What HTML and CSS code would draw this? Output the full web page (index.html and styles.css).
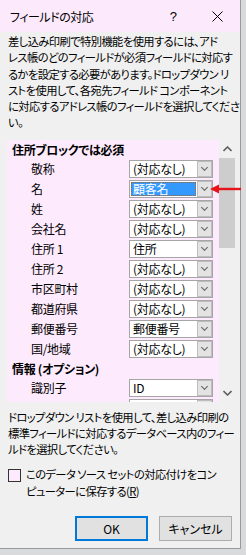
FILE: index.html
```html
<!DOCTYPE html>
<html lang="ja">
<head>
	<meta charset="UTF-8" />
	<title>フィールドの対応</title>
	<link rel="stylesheet" href="styles.css">
</head>
<body>
	<div class="dialog">
		<div class="titlebar">
			<span class="title">フィールドの対応</span>
			<span class="help">?</span>
			<svg class="close" width="11" height="11" viewBox="0 0 11 11"><path d="M0.5 0.5 L10.5 10.5 M10.5 0.5 L0.5 10.5" stroke="#000" stroke-width="1"/></svg>
		</div>

		<div class="body">
			<p class="desc">差し込み印刷で特別機能を使用するには、アド<br>レス帳のどのフィールドが必須フィールドに対応す<br>るかを設定する必要があります。ドロップダウン リ<br>ストを使用して、各宛先フィールド コンポーネント<br>に対応するアドレス帳のフィールドを選択してくださ<br>い。</p>

			<div class="listbox">
				<div class="list">
					<div class="group">住所ブロックでは必須</div>
					<div class="row"><span class="label">敬称</span><div class="combo"><span class="value">(対応なし)</span><span class="drop"></span></div></div>
					<div class="row"><span class="label">名</span><div class="combo focused"><span class="value">顧客名</span><span class="drop"></span></div></div>
					<div class="row"><span class="label">姓</span><div class="combo"><span class="value">(対応なし)</span><span class="drop"></span></div></div>
					<div class="row"><span class="label">会社名</span><div class="combo"><span class="value">(対応なし)</span><span class="drop"></span></div></div>
					<div class="row"><span class="label">住所 1</span><div class="combo"><span class="value">住所</span><span class="drop"></span></div></div>
					<div class="row"><span class="label">住所 2</span><div class="combo"><span class="value">(対応なし)</span><span class="drop"></span></div></div>
					<div class="row"><span class="label">市区町村</span><div class="combo"><span class="value">(対応なし)</span><span class="drop"></span></div></div>
					<div class="row"><span class="label">都道府県</span><div class="combo"><span class="value">(対応なし)</span><span class="drop"></span></div></div>
					<div class="row"><span class="label">郵便番号</span><div class="combo"><span class="value">郵便番号</span><span class="drop"></span></div></div>
					<div class="row"><span class="label">国/地域</span><div class="combo"><span class="value">(対応なし)</span><span class="drop"></span></div></div>
					<div class="group">情報 (オプション)</div>
					<div class="row"><span class="label">識別子</span><div class="combo"><span class="value">ID</span><span class="drop"></span></div></div>
					<div class="row"><span class="label"></span><div class="combo"><span class="value"></span><span class="drop"></span></div></div>
				</div>
				<div class="scrollbar">
					<svg class="arrow" width="9" height="6" viewBox="0 0 9 6"><path d="M0.5 5 L4.5 1 L8.5 5" fill="none" stroke="#606060" stroke-width="1.6"/></svg>
					<div class="thumb"></div>
					<div class="track"></div>
					<svg class="arrow" width="9" height="6" viewBox="0 0 9 6"><path d="M0.5 1 L4.5 5 L8.5 1" fill="none" stroke="#606060" stroke-width="1.6"/></svg>
				</div>
			</div>

			<p class="desc note">ドロップダウン リストを使用して、差し込み印刷の<br>標準フィールドに対応するデータベース内のフィー<br>ルドを選択してください。</p>

			<label class="check">
				<span class="box"></span>
				<span class="check-text">このデータ ソース セットの対応付けをコン<br>ピューターに保存する(<u>R</u>)</span>
			</label>

			<div class="buttons">
				<button class="btn default">OK</button>
				<button class="btn">キャンセル</button>
			</div>
		</div>
	</div>

	<svg class="pointer" width="32" height="10" viewBox="0 0 32 10"><path d="M31 5 L7 5" stroke="#e8141c" stroke-width="2.4"/><path d="M0 5 L9 0.5 L9 9.5 Z" fill="#e8141c"/></svg>
</body>
</html>
```

FILE: styles.css
```css
body, html {
	margin: 0;
	width: 100%;
	height: 100%;
	overflow: hidden;
	background-color: #d9dadc;
	font-family: "Noto Sans CJK JP", "Noto Sans", sans-serif;
	font-size: 12px;
	font-feature-settings: "palt";
	color: #000;
}
.dialog {
	width: 240px;
	height: 548px;
	background-color: #f0f0f0;
	border-right: 1px solid #9a9a9a;
	border-bottom: 1px solid #9a9a9a;
	display: flex;
	flex-direction: column;
}
.titlebar {
	height: 32px;
	flex: none;
	display: flex;
	align-items: center;
	background-color: #fce9fc;
	padding-left: 10px;
}
.title {
	flex: 1;
	letter-spacing: -0.5px;
}
.help {
	font-family: "Liberation Sans", sans-serif;
	font-size: 13px;
	margin-right: 35px;
}
.close {
	margin-right: 17px;
}
.body {
	padding: 1px 0 0 8px;
	display: flex;
	flex-direction: column;
}
.desc {
	margin: 0;
	font-size: 11.3px;
	line-height: 16.3px;
	white-space: nowrap;
	letter-spacing: -0.6px;
}
.listbox {
	display: flex;
	flex: none;
	width: 228px;
	height: 262px;
	margin: 9px 0 0 -1px;
	overflow: hidden;
}
.list {
	width: 212px;
	background-color: #fdebfd;
	padding: 1px 0 0 5px;
	box-sizing: border-box;
}
.group {
	font-weight: bold;
	height: 18px;
	line-height: 18px;
	margin-bottom: 1px;
	letter-spacing: -0.3px;
}
.row {
	display: flex;
	align-items: center;
	height: 18px;
	margin-bottom: 2px;
}
.label {
	width: 98px;
	padding-left: 19px;
	white-space: nowrap;
	letter-spacing: -0.3px;
}
.combo {
	width: 84px;
	height: 18px;
	box-sizing: border-box;
	border: 1px solid #a6a6a6;
	background-color: #fff;
	display: flex;
}
.value {
	flex: 1;
	padding-left: 3px;
	line-height: 16px;
	white-space: nowrap;
	letter-spacing: -0.3px;
}
.combo.focused .value {
	background-color: #3399ff;
	color: #fff;
	outline: 1px dotted #b06020;
	outline-offset: -1px;
	margin: 1px;
	line-height: 14px;
	padding-left: 2px;
}
.drop {
	width: 15px;
	flex: none;
	box-sizing: border-box;
	border: 1px solid #bdbdbd;
	background-color: #e3e3e3;
	position: relative;
}
.drop::after {
	content: "";
	position: absolute;
	left: 4px;
	top: 3px;
	width: 4px;
	height: 4px;
	border-right: 1px solid #606060;
	border-bottom: 1px solid #606060;
	transform: rotate(45deg);
}
.scrollbar {
	width: 16px;
	display: flex;
	flex-direction: column;
	align-items: center;
	background-color: #f0f0f0;
}
.scrollbar .arrow {
	flex: none;
	margin: 6px 0;
}
.thumb {
	width: 100%;
	height: 90px;
	flex: none;
	background-color: #cdcdcd;
}
.track {
	flex: 1;
}
.note {
	margin-top: 7px;
}
.check {
	display: flex;
	align-items: flex-start;
	margin-top: 8px;
}
.check-text {
	font-size: 11.3px;
	line-height: 17px;
	white-space: nowrap;
	letter-spacing: -0.6px;
}
.box {
	width: 11px;
	height: 11px;
	border: 1px solid #333;
	background-color: #fdebfd;
	margin: 3px 5px 0 0;
	flex: none;
}
.buttons {
	display: flex;
	justify-content: flex-end;
	gap: 11px;
	margin: 16px 8px 0 0;
}
.btn {
	width: 73px;
	height: 25px;
	background-color: #e1e1e1;
	border: 1px solid #adadad;
	font-family: inherit;
	font-size: 12px;
	font-feature-settings: "palt";
	padding: 0;
}
.btn.default {
	border: 2px solid #0078d7;
}
.pointer {
	position: absolute;
	left: 210px;
	top: 184px;
}
```
